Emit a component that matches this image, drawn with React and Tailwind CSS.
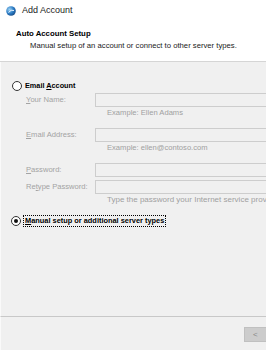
import React from "react";

const font = { fontFamily: '"Liberation Sans", Arial, sans-serif' };

// Disabled field row: label on the left, empty input running off the right edge
const FieldRow = ({ label, className = "" }) => (
    <div className={`flex items-center h-[14px] ${className}`}>
        <span className="w-[94px] pl-[25px] shrink-0 text-[7.6px] text-[#a3a3a3] whitespace-nowrap">{label}</span>
        <div className="h-[14px] w-[200px] shrink-0 border border-[#cdcdcd] bg-[#f0f0f0]" />
    </div>
);

const Hint = ({ children, className = "" }) => (
    <div className={`h-[12px] leading-[12px] pl-[106px] text-[7.6px] text-[#a0a0a0] whitespace-nowrap overflow-hidden ${className}`}>{children}</div>
);

const Radio = ({ checked }) => (
    <div className="w-[10px] h-[10px] rounded-full border border-[#333] bg-white flex items-center justify-center shrink-0">
        {checked && <div className="w-[4px] h-[4px] rounded-full bg-[#111]" />}
    </div>
);

export default function App() {
    return (
        <div style={font} className="w-[266px] h-[350px] overflow-hidden flex flex-col bg-white text-black">
            {/* Title bar */}
            <div className="h-[22px] flex items-center pl-[6px] gap-[6px] shrink-0">
                <svg width="10" height="10" viewBox="0 0 10 10">
                    <defs>
                        <radialGradient id="g" cx="35%" cy="35%" r="70%">
                            <stop offset="0%" stopColor="#9fd3f5" />
                            <stop offset="60%" stopColor="#2a7bc4" />
                            <stop offset="100%" stopColor="#1a4f8a" />
                        </radialGradient>
                    </defs>
                    <circle cx="5" cy="5" r="4.8" fill="url(#g)" />
                    <path d="M2.5 6.5 Q5 3 8 4.5" stroke="#e8f4ff" strokeWidth="1" fill="none" />
                </svg>
                <span className="text-[9px] text-[#222]">Add Account</span>
            </div>

            {/* Header */}
            <div className="h-[40px] shrink-0 pt-[6px] border-b border-[#d5d5d5]">
                <div className="pl-[16px] text-[7.8px] leading-[12px] font-bold">Auto Account Setup</div>
                <div className="pl-[30px] text-[7.7px] leading-[11px] text-[#222] whitespace-nowrap">
                    Manual setup of an account or connect to other server types.
                </div>
            </div>

            {/* Body */}
            <div className="flex-1 bg-[#f0f0f0] border-l border-[#fafafa] flex flex-col">
                <div className="mt-[17px] h-[14px] flex items-center pl-[11px] gap-[3px]">
                    <Radio />
                    <span className="text-[7.3px] font-bold">Email <u>A</u>ccount</span>
                </div>
                <FieldRow label={<><u>Y</u>our Name:</>} />
                <Hint>Example: Ellen Adams</Hint>
                <FieldRow className="mt-[9px]" label={<><u>E</u>mail Address:</>} />
                <Hint>Example: ellen@contoso.com</Hint>
                <FieldRow className="mt-[9px]" label={<><u>P</u>assword:</>} />
                <FieldRow className="mt-[3px]" label={<>Re<u>t</u>ype Password:</>} />
                <Hint className="text-[8px]">Type the password your Internet service provider has given you.</Hint>
                <div className="mt-[8px] h-[14px] flex items-center pl-[10px] gap-[2px]">
                    <Radio checked />
                    <span className="text-[7.4px] font-bold border border-dotted border-black px-px leading-[10px] whitespace-nowrap">
                        <u>M</u>anual setup or additional server types
                    </span>
                </div>
            </div>

            {/* Footer */}
            <div className="h-[34px] shrink-0 bg-[#f0f0f0] border-t border-[#c8c8c8] border-l border-l-[#fafafa] flex items-start justify-end pt-[10px]">
                <div className="w-[22px] h-[15px] bg-[#cccccc] border border-[#c0c0c0] border-r-0 flex items-center pl-[8px] text-[8px] text-[#888]">&lt;</div>
            </div>
        </div>
    );
}
